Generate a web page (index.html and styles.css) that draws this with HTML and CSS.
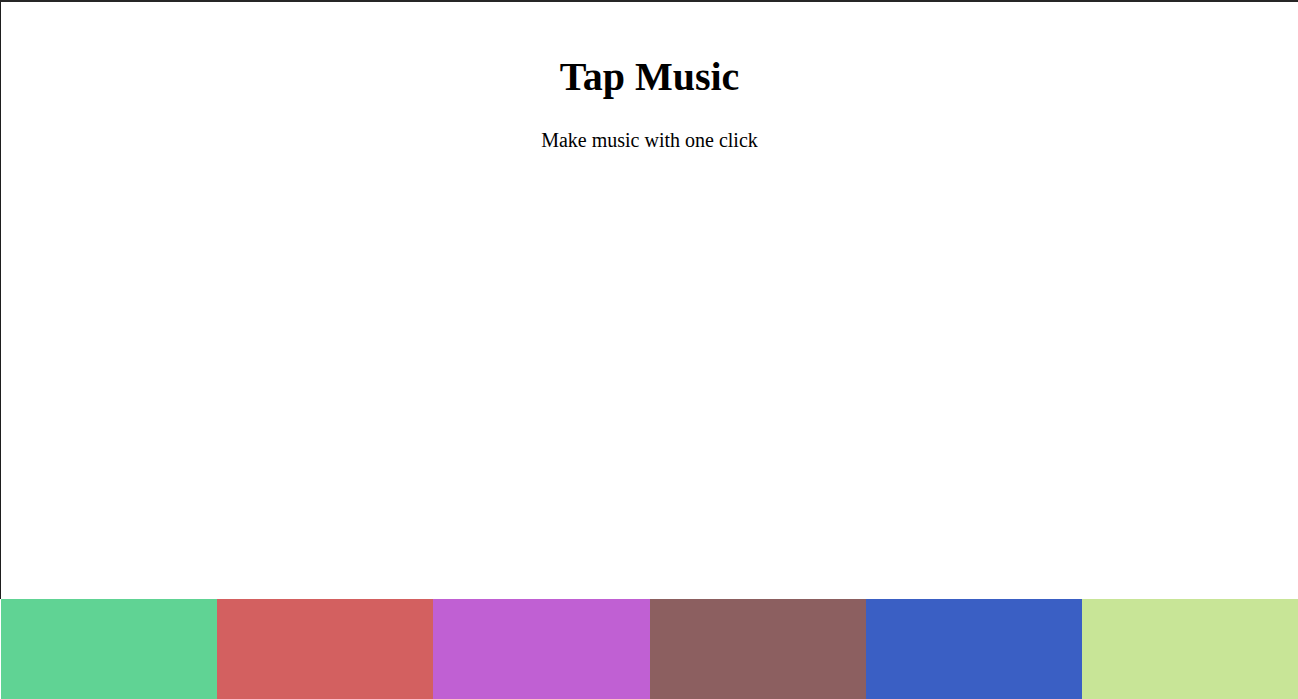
FILE: index.html
```html
<!DOCTYPE html>
<html lang="en">
<head>
<meta charset="utf-8">
<title>Tap Music</title>
<link rel="stylesheet" href="styles.css">
</head>
<body>
<div class="app">
  <header class="intro">
    <h1 class="title">Tap Music</h1>
    <p class="subtitle">Make music with one click</p>
  </header>
  <div class="pads">
    <div class="pad pad1"></div>
    <div class="pad pad2"></div>
    <div class="pad pad3"></div>
    <div class="pad pad4"></div>
    <div class="pad pad5"></div>
    <div class="pad pad6"></div>
  </div>
</div>
</body>
</html>
```
FILE: styles.css
```css
html, body {
  margin: 0;
  padding: 0;
  height: 100%;
}
body {
  font-family: "Liberation Serif", "Times New Roman", serif;
  color: #000;
  background: #fff;
}
.app {
  height: 100vh;
  display: flex;
  flex-direction: column;
  box-sizing: border-box;
  border-top: 2px solid #262626;
}
.intro {
  flex: 1;
  border-left: 1px solid #1e1e1e;
  text-align: center;
  padding-top: 52px;
}
.title {
  margin: 0;
  font-size: 40px;
  font-weight: bold;
  line-height: 46px;
}
.subtitle {
  margin: 29px 0 0;
  font-size: 20px;
  line-height: 23px;
}
.pads {
  display: flex;
  height: 100px;
  padding-left: 1px;
}
.pad {
  flex: 1;
}
.pad1 { background: #60d394; }
.pad2 { background: #d36060; }
.pad3 { background: #c060d3; }
.pad4 { background: #8c5f60; }
.pad5 { background: #3a5fc4; }
.pad6 { background: #c8e597; }
```
